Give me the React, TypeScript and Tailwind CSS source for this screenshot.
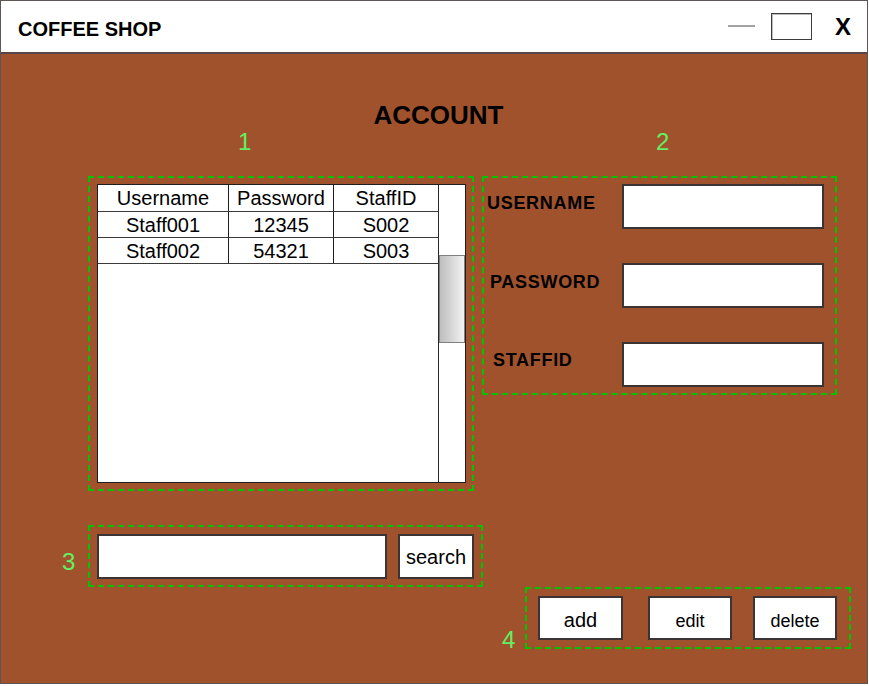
const rows = [
  { username: 'Staff001', password: '12345', staffId: 'S002' },
  { username: 'Staff002', password: '54321', staffId: 'S003' }
]

const fields = [
  { label: 'USERNAME', offset: 'ml-[3px]', lift: 'mb-[7px]' },
  { label: 'PASSWORD', offset: 'ml-[6px]', lift: 'mb-[6px]' },
  { label: 'STAFFID', offset: 'ml-[9px]', lift: 'mb-[9px]' }
]

const Cell = ({ children, className = '' }: { children: React.ReactNode; className?: string }) => (
  <div className={`flex items-center justify-center text-[20px] text-black ${className}`}>
    {children}
  </div>
)

const AccountTable = () => {
  return (
    <div className="w-[369px] h-[299px] bg-white border border-[#1e1e1e] flex">
      <div className="flex-1 flex flex-col">
        <div className="flex h-[27px] border-b border-[#3a3a3a]">
          <Cell className="w-[131px] border-r border-[#1e1e1e]">Username</Cell>
          <Cell className="w-[105px] border-r border-[#1e1e1e]">Password</Cell>
          <Cell className="flex-1">StaffID</Cell>
        </div>
        {rows.map((row, index) => {
          return (
            <div className="flex h-[26px] border-b border-[#3a3a3a]" key={index}>
              <Cell className="w-[131px] border-r border-[#1e1e1e]">{row.username}</Cell>
              <Cell className="w-[105px] border-r border-[#1e1e1e]">{row.password}</Cell>
              <Cell className="flex-1">{row.staffId}</Cell>
            </div>
          )
        })}
      </div>
      {/* scrollbar */}
      <div className="w-[27px] border-l border-[#2a2a2a] pt-[70px]">
        <div className="h-[88px] border border-[#808080] bg-linear-to-r from-[#bdbdbd] to-[#f3f3f3]" />
      </div>
    </div>
  )
}

const Tag = ({ n, className = '' }: { n: string; className?: string }) => (
  <span className={`text-[24px] leading-[24px] text-[#62f062] ${className}`}>{n}</span>
)

const Btn = ({ children, className = '' }: { children: React.ReactNode; className?: string }) => (
  <button className={`bg-white border-2 border-[#3b3434] text-black flex items-center justify-center ${className}`}>
    {children}
  </button>
)

export default function App() {
  return (
    <div className="w-[869px] h-[686px] bg-white font-['Liberation_Sans',Arial,sans-serif]">
      <div className="w-[868px] h-[684px] border border-[#5f5555] flex flex-col overflow-hidden">
        <header className="h-[53px] shrink-0 bg-white border-b-2 border-[#554747] flex items-center pl-[17px] pr-[16px]">
          <span className="text-[20px] font-bold text-black translate-y-[2px]">COFFEE SHOP</span>
          <div className="ml-auto flex items-center">
            <div className="w-[27px] h-[2px] bg-[#a3a3a3] -translate-y-[1px]" />
            <div className="ml-[16px] w-[41px] h-[27px] border border-[#3c3c3c] shadow-[inset_1px_1px_0_#bcbcbc]" />
            <span className="ml-[23px] text-[24px] font-bold text-black leading-none">X</span>
          </div>
        </header>

        <main className="flex-1 bg-[#a0522d] flex flex-col">
          <div className="mt-[46px] flex justify-center pl-[9px]">
            <h1 className="text-[26px] leading-[30px] font-bold text-black">ACCOUNT</h1>
          </div>

          <div className="flex h-[24px]">
            <Tag n="1" className="ml-[237px] w-[14px]" />
            <Tag n="2" className="ml-[404px] w-[14px]" />
          </div>

          <div className="mt-[22px] ml-[87px] flex items-start gap-[8px]">
            <div className="w-[386px] h-[315px] border-2 border-dashed border-[#00c400] pt-[6px] pl-[7px]">
              <AccountTable />
            </div>

            <div className="w-[355px] border-2 border-dashed border-[#00c400] pt-[6px] pr-[11px] pb-[6px] flex flex-col gap-[34px]">
              {fields.map((f) => {
                return (
                  <div className="flex items-center h-[45px]" key={f.label}>
                    <span className={`text-[18px] font-bold tracking-[0.7px] text-black ${f.offset} ${f.lift}`}>
                      {f.label}
                    </span>
                    <input className="ml-auto w-[202px] h-[45px] bg-white border-2 border-[#3b3434] outline-none" />
                  </div>
                )
              })}
            </div>
          </div>

          <div className="mt-[34px] flex items-start">
            <Tag n="3" className="ml-[61px] w-[26px] mt-[25px]" />
            <div className="w-[395px] h-[62px] border-2 border-dashed border-[#00c400] pt-[7px] pl-[7px] flex gap-[11px]">
              <input className="w-[290px] h-[45px] bg-white border-2 border-[#3b3434] outline-none" />
              <Btn className="w-[76px] h-[45px] text-[20px]">search</Btn>
            </div>
          </div>

          <div className="flex items-start">
            <Tag n="4" className="ml-[501px] w-[23px] mt-[41px]" />
            <div className="w-[326px] h-[62px] border-2 border-dashed border-[#00c400] pt-[7px] pl-[11px] flex">
              <Btn className="w-[85px] h-[44px] text-[20px] pt-[4px]">add</Btn>
              <Btn className="ml-[25px] w-[84px] h-[44px] text-[18px] pt-[6px]">edit</Btn>
              <Btn className="ml-[21px] w-[84px] h-[44px] text-[18px] pt-[6px]">delete</Btn>
            </div>
          </div>
        </main>
      </div>
    </div>
  )
}
